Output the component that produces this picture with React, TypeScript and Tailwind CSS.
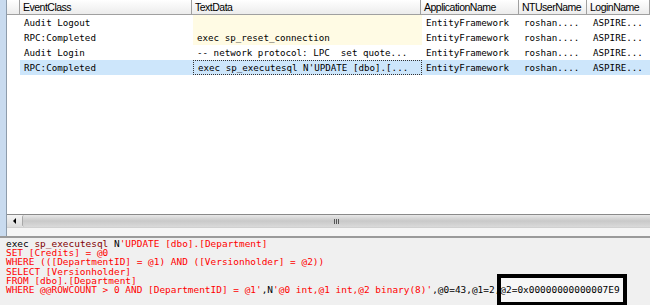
import React from 'react'

const cols = [
  { key: 'event', label: 'EventClass', w: 'w-[172px]' },
  { key: 'text', label: 'TextData', w: 'w-[229px]' },
  { key: 'app', label: 'ApplicationName', w: 'w-[98px]' },
  { key: 'nt', label: 'NTUserName', w: 'w-[68px]' },
  { key: 'login', label: 'LoginName', w: 'flex-1' },
]

const rows = [
  { event: 'Audit Logout', text: '', app: 'EntityFramework', nt: 'roshan....', login: 'ASPIRE...', yellow: true },
  { event: 'RPC:Completed', text: 'exec sp_reset_connection', app: 'EntityFramework', nt: 'roshan....', login: 'ASPIRE...', yellow: true },
  { event: 'Audit Login', text: '-- network protocol: LPC  set quote...', app: 'EntityFramework', nt: 'roshan....', login: 'ASPIRE...' },
  { event: 'RPC:Completed', text: "exec sp_executesql N'UPDATE [dbo].[...", app: 'EntityFramework', nt: 'roshan....', login: 'ASPIRE...', selected: true },
]

export default function App() {
  return (
    <div className="flex h-[305px] w-[650px] flex-col overflow-hidden bg-white">
      {/* trace grid */}
      <div className="flex h-[236px] shrink-0">
        <div className="w-[6px] shrink-0 bg-[#c9dbef]" />
        <div className="flex min-w-0 flex-1 flex-col border-l border-[#8e9cab]">
          {/* header */}
          <div className="flex h-[15px] shrink-0 border-b border-[#a0a0a0] bg-gradient-to-b from-white to-[#ececec] font-['Liberation_Sans',sans-serif] text-[10.5px] leading-[14px] tracking-[-0.5px] text-black">
            <div className="w-[13px] shrink-0 border-r border-[#a0a0a0]" />
            {cols.map((c) => (
              <div key={c.key} className={`${c.w} shrink-0 overflow-hidden whitespace-nowrap border-r border-[#a0a0a0] pl-[3px]`}>
                {c.label}
              </div>
            ))}
          </div>

          {/* rows */}
          <div className="flex-1 font-['DejaVu_Sans_Mono',monospace] text-[9.2px] leading-[15px] text-black">
            {rows.map((r, i) => (
              <div key={i} className="flex h-[15px]">
                <div className="w-[13px] shrink-0" />
                <div className={`flex flex-1 ${r.selected ? 'bg-[#cde6fb]' : ''}`}>
                  <div className="w-[173px] shrink-0 whitespace-pre pl-[4px]">{r.event}</div>
                  <div
                    className={`w-[229px] shrink-0 whitespace-pre pl-[4px] ${r.yellow ? 'bg-[#fffbe4]' : ''} ${
                      r.selected ? 'border border-dotted border-[#333] pl-[3px] leading-[13px]' : ''
                    }`}
                  >
                    {r.text}
                  </div>
                  <div className="w-[98px] shrink-0 whitespace-pre pl-[4px]">{r.app}</div>
                  <div className="w-[68px] shrink-0 whitespace-pre pl-[4px]">{r.nt}</div>
                  <div className="flex-1 whitespace-pre pl-[5px]">{r.login}</div>
                </div>
              </div>
            ))}
          </div>

          {/* horizontal scrollbar */}
          <div className="flex h-[13px] shrink-0 border-t border-[#8a8a8a]">
            <div className="flex w-[15px] shrink-0 items-center justify-center bg-gradient-to-b from-[#f4f4f4] to-[#dcdcdc]">
              <div className="h-0 w-0 border-y-[3px] border-r-[3px] border-y-transparent border-r-black" />
            </div>
            <div className="flex flex-1 items-center justify-center rounded-l-[2px] border-l border-[#a8a8a8] bg-gradient-to-b from-[#e8e8e8] via-[#c9c9c9] to-[#dadada]">
              <div className="flex gap-[1px]">
                <div className="h-[5px] w-[1px] bg-[#555]" />
                <div className="h-[5px] w-[1px] bg-[#555]" />
                <div className="h-[5px] w-[1px] bg-[#555]" />
              </div>
            </div>
          </div>
          <div className="h-[9px] shrink-0 border-t border-[#d0d0d0] bg-[#f5f5f5]" />
        </div>
      </div>

      {/* statement text */}
      <div className="flex-1 whitespace-pre border-t-2 border-[#9a9a9a] bg-[#f0f0f0] pl-[6px] pt-[1px] font-['DejaVu_Sans_Mono',monospace] text-[9.45px] leading-[9.2px] text-[#ff0000]">
        <div>
          <span className="text-black">exec </span>
          <span className="text-[#800000]">sp_executesql</span>
          <span className="text-black"> N</span>'UPDATE [dbo].[Department]
        </div>
        <div>SET [Credits] = @0</div>
        <div>WHERE (([DepartmentID] = @1) AND ([Versionholder] = @2))</div>
        <div>SELECT [Versionholder]</div>
        <div>FROM [dbo].[Department]</div>
        <div>
          WHERE @@ROWCOUNT &gt; 0 AND [DepartmentID] = @1'<span className="text-black">,N</span>'@0 int,@1 int,@2 binary(8)'
          <span className="text-black">,@0=43,@1=2,</span>
          <span className="relative text-black">
            <span className="absolute bottom-[-11px] left-[-3px] right-[-7px] top-[-10px] border-4 border-black bg-[#f7f7f7]" />
            <span className="relative">@2=0x00000000000007E9</span>
          </span>
        </div>
      </div>
    </div>
  )
}
